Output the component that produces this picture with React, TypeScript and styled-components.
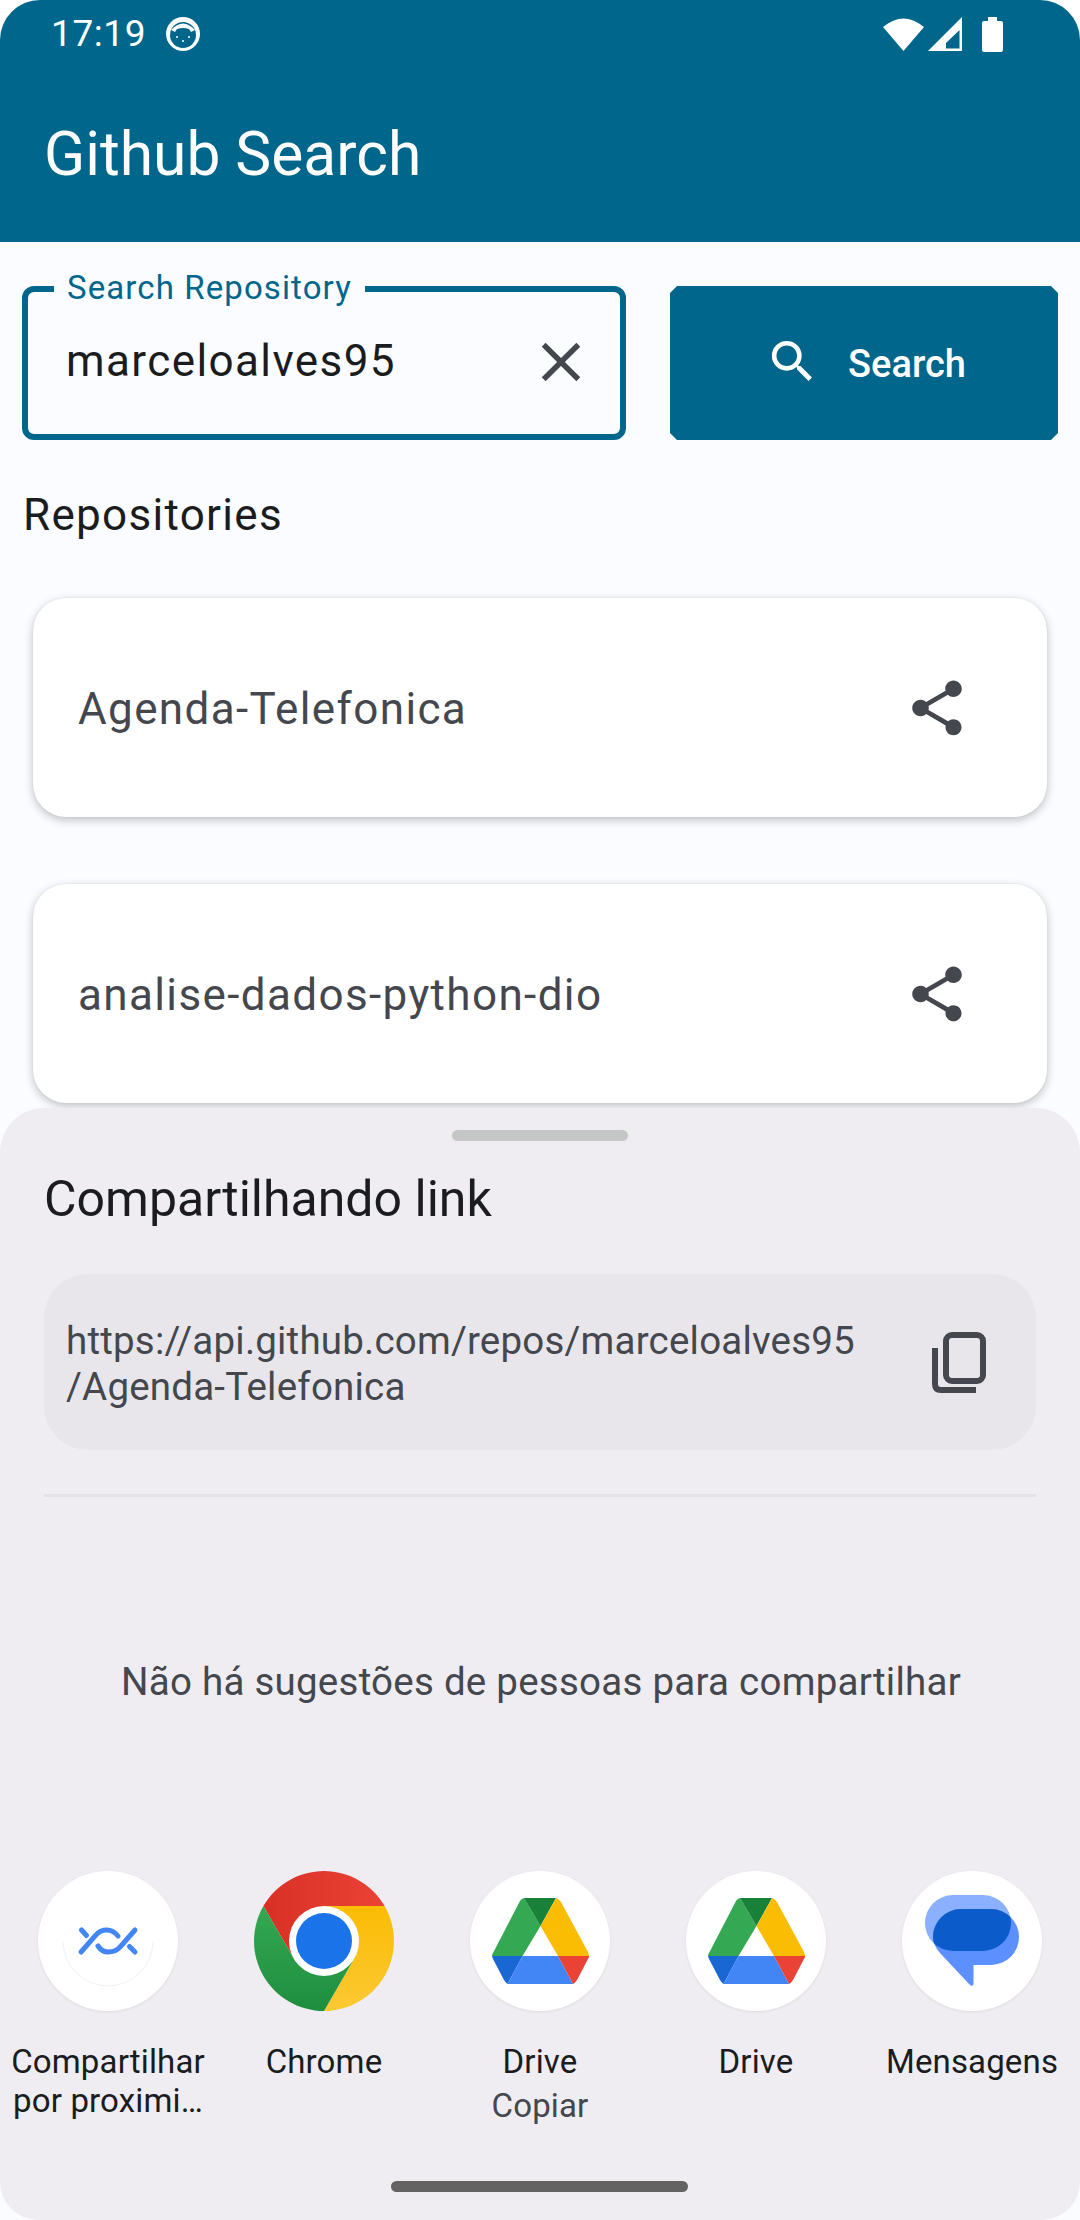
import React from 'react';
import styled, { createGlobalStyle } from 'styled-components';
import { MdClose, MdSearch, MdShare } from 'react-icons/md';

const GlobalStyle = createGlobalStyle`
	html, body {
		margin: 0;
		padding: 0;
		background: #fff;
	}

	* {
		box-sizing: border-box;
	}
`;

const Screen = styled.div`
	position: relative;
	width: 1080px;
	height: 2220px;
	overflow: hidden;
	background: #fbfcff;
	border-radius: 40px 40px 0 0;
	font-family: Roboto, 'Liberation Sans', sans-serif;
`;

const AppBar = styled.header`
	height: 242px;
	background: #00668b;
	color: #fff;
	display: flex;
	flex-direction: column;
`;

const StatusBar = styled.div`
	height: 68px;
	padding: 0 77px 0 51px;
	display: flex;
	align-items: center;
	justify-content: space-between;
`;

const StatusGroup = styled.div`
	display: flex;
	align-items: center;
	gap: ${(p: { $gap: number }) => p.$gap}px;
`;

const Clock = styled.span`
	font-size: 37px;
	line-height: 68px;
	letter-spacing: 0.6px;
`;

const BatterySlot = styled.span`
	display: flex;
	margin-left: 16px;
`;

const AppTitle = styled.h1`
	margin: 0;
	padding: 51px 0 0 44px;
	font-size: 60.5px;
	line-height: 72px;
	font-weight: 400;
`;

const SearchRow = styled.div`
	padding: 44px 22px 0 22px;
	display: flex;
	justify-content: space-between;
`;

const SearchField = styled.div`
	position: relative;
	width: 604px;
	height: 154px;
	border: 6.5px solid #00668b;
	border-radius: 12px;
	padding: 0 39px 0 38px;
	display: flex;
	align-items: flex-start;
	justify-content: space-between;
	color: #1a1c1e;
`;

const FieldLabel = styled.span`
	position: absolute;
	top: -23px;
	left: 26px;
	padding: 0 13px;
	background: #fbfcff;
	color: #00668b;
	font-size: 33px;
	line-height: 38px;
	letter-spacing: 1.1px;
`;

const FieldValue = styled.span`
	margin-top: 43px;
	font-size: 44px;
	line-height: 52px;
	letter-spacing: 1.4px;
`;

const ClearButton = styled.span`
	margin-top: 37px;
	margin-right: -13px;
	display: flex;
	color: #44474e;
	font-size: 66px;
`;

const SearchButton = styled.button`
	width: 388px;
	height: 154px;
	border: 0;
	background: #00668b;
	clip-path: polygon(7px 0, 381px 0, 388px 7px, 388px 147px, 381px 154px, 7px 154px, 0 147px, 0 7px);
	color: #fff;
	display: flex;
	align-items: center;
	justify-content: center;
	gap: 28px;
	padding: 2px 0 0 3px;
	font-family: inherit;
	font-size: 38px;
	font-weight: 500;

	svg {
		font-size: 55px;
		margin-top: -6px;
	}
`;

const SectionTitle = styled.h2`
	margin: 0;
	padding: 50px 0 0 23px;
	font-size: 44px;
	line-height: 50px;
	font-weight: 400;
	letter-spacing: 1.3px;
	color: #1a1c1e;
`;

const RepoList = styled.div`
	padding: 58px 33px 0;
	display: flex;
	flex-direction: column;
	gap: 67px;
`;

const RepoCard = styled.div`
	height: 219px;
	border-radius: 33px;
	background: #fff;
	box-shadow: 0 3px 10px rgba(0, 0, 0, 0.24), 0 0 2px rgba(0, 0, 0, 0.08);
	padding: 0 77px 0 45px;
	display: flex;
	align-items: center;
	justify-content: space-between;
`;

const RepoName = styled.span`
	padding-top: 3px;
	font-size: 44px;
	letter-spacing: 1.375px;
	color: #44474e;
`;

const ShareButton = styled.span`
	display: flex;
	color: #44474e;
	font-size: 66px;
`;

const Sheet = styled.section`
	position: absolute;
	left: 0;
	right: 0;
	top: 1108px;
	bottom: 0;
	background: #efedf2;
	border-radius: 44px 44px 38px 38px;
	display: flex;
	flex-direction: column;
	align-items: stretch;
`;

const Handle = styled.div`
	width: 176px;
	height: 11px;
	margin: 22px auto 0;
	border-radius: 6px;
	background: #c4c7c5;
`;

const SheetTitle = styled.h3`
	margin: 0;
	padding: 28px 44px 0;
	font-size: 50px;
	line-height: 60px;
	font-weight: 400;
	color: #1a1c1e;
`;

const LinkBox = styled.div`
	margin: 45px 44px 0;
	height: 176px;
	border-radius: 44px;
	background: #e8e6eb;
	padding: 3px 50px 0 22px;
	display: flex;
	align-items: center;
	justify-content: space-between;

	svg {
		margin-top: -3px;
	}
`;

const LinkText = styled.div`
	font-size: 38.5px;
	line-height: 46px;
	letter-spacing: 0.2px;
	color: #44474e;
`;

const Divider = styled.div`
	height: 3px;
	margin: 44px 44px 0;
	background: #e2e1e6;
`;

const EmptyNote = styled.p`
	margin: 162px 0 0;
	padding-left: 2px;
	text-align: center;
	font-size: 38.5px;
	line-height: 46px;
	letter-spacing: 0.25px;
	color: #44474e;
`;

const TargetGrid = styled.div`
	margin-top: 166px;
	display: grid;
	grid-template-columns: repeat(5, 216px);
`;

const Target = styled.div`
	display: flex;
	flex-direction: column;
	align-items: center;
	text-align: center;
`;

const TargetIcon = styled.div`
	width: 140px;
	height: 140px;
	border-radius: 50%;
	background: ${(p: { $plain?: boolean }) => (p.$plain ? 'transparent' : '#fff')};
	box-shadow: ${(p: { $plain?: boolean }) => (p.$plain ? 'none' : '0 1px 3px rgba(0, 0, 0, 0.08)')};
	display: flex;
	align-items: center;
	justify-content: center;
`;

const TargetLabel = styled.div`
	margin-top: 31px;
	width: 210px;
	font-size: 33px;
	line-height: 39px;
	letter-spacing: 0.15px;
	color: #1a1c1e;
`;

const TargetSub = styled.div`
	margin-top: 5px;
	font-size: 33px;
	line-height: 39px;
	letter-spacing: 0.15px;
	color: #44474e;
`;

const HomeIndicator = styled.div`
	position: absolute;
	left: 391px;
	bottom: 28px;
	width: 297px;
	height: 11px;
	border-radius: 6px;
	background: #636363;
`;

const BotIcon = () => (
	<svg width="34" height="34" viewBox="0 0 34 34">
		<circle cx="17" cy="17" r="17" fill="#fff" />
		<circle cx="17" cy="18" r="13" fill="#00668b" />
		<path d="M5 13 Q17 0 29 13 L25 15 L23 12 Q17 10 11 12 L9 15 Z" fill="#fff" />
		<circle cx="11" cy="20" r="1" fill="#fff" />
		<circle cx="17" cy="24" r="1" fill="#fff" />
		<circle cx="23" cy="20" r="1" fill="#fff" />
	</svg>
);

const WifiIcon = () => (
	<svg width="41" height="34" viewBox="0 0 41 34">
		<path d="M0 10 Q20.5 -7 41 10 L20.5 34 Z" fill="#fff" />
	</svg>
);

const SignalIcon = () => (
	<svg width="34" height="34" viewBox="0 0 34 34">
		<path d="M34 0 V34 H0 Z" fill="#fff" />
		<path d="M31.5 13 V31.5 H18 V26 Z" fill="#00668b" />
	</svg>
);

const BatteryIcon = () => (
	<svg width="21" height="35" viewBox="0 0 21 35">
		<path d="M6 0 H15 V4 H19 Q21 4 21 6 V33 Q21 35 19 35 H2 Q0 35 0 33 V6 Q0 4 2 4 H6 Z" fill="#fff" />
	</svg>
);

const CopyIcon = () => (
	<svg width="54" height="61" viewBox="0 0 54 61" fill="none" stroke="#44474e" strokeWidth="6">
		<rect x="14" y="3" width="37" height="46" rx="6" />
		<path d="M3 16 V52 Q3 58 9 58 H44" />
	</svg>
);

const NearbyIcon = () => (
	<svg width="140" height="140" viewBox="0 0 140 140" fill="none">
		<path d="M70 115 A45 45 0 0 1 25 70" stroke="#f1f1f1" strokeWidth="1" />
		<path d="M115 70 A45 45 0 0 1 70 115" stroke="#f1f1f1" strokeWidth="1" />
		<g transform="translate(41 57)" stroke="#4285f4" strokeWidth="5" strokeLinecap="round">
			<path d="M2 24 L17 7 Q21 2 28 2 Q34 2 39 8" />
			<path d="M56 2 L41 19 Q37 24 29 24 Q23 24 19 18" />
			<path d="M2.5 2 L7.5 7.5" />
			<path d="M50.5 18.5 L56 24" />
		</g>
	</svg>
);

const ChromeIcon = () => (
	<svg width="140" height="140" viewBox="-70 -70 140 140">
		<defs>
			<linearGradient id="chromeRed" x1="0" y1="0" x2="1" y2="0">
				<stop offset="0" stopColor="#d93025" />
				<stop offset="1" stopColor="#ea4335" />
			</linearGradient>
			<linearGradient id="chromeYellow" x1="0" y1="0" x2="0" y2="1">
				<stop offset="0" stopColor="#fbbc04" />
				<stop offset="1" stopColor="#fcc934" />
			</linearGradient>
			<linearGradient id="chromeGreen" x1="0" y1="1" x2="0" y2="0">
				<stop offset="0" stopColor="#1e8e3e" />
				<stop offset="1" stopColor="#34a853" />
			</linearGradient>
		</defs>
		<path d="M60.6 -35 A70 70 0 0 0 -60.6 -35 L-30.3 17.5 L0 -35 Z" fill="url(#chromeRed)" />
		<path d="M60.6 -35 A70 70 0 0 1 0 70 L30.3 17.5 L0 -35 Z" fill="url(#chromeYellow)" />
		<path d="M-60.6 -35 A70 70 0 0 0 0 70 L30.3 17.5 L-30.3 17.5 Z" fill="url(#chromeGreen)" />
		<circle r="35" fill="#fff" />
		<circle r="28" fill="#1a73e8" />
	</svg>
);

const DriveIcon = () => (
	<svg width="97" height="86" viewBox="0 0 97 86">
		<path d="M48.5 28 L30.5 58 H0 Q0 56 1 55 L28 3 Q29 1 32 0 Z" fill="#34a853" />
		<path d="M32 0 H64 L48.5 28 Z" fill="#188038" />
		<path d="M48.5 28 L64 0 Q67 1 69 4 L96 54 Q97 56 97 58 H66 Z" fill="#fbbc04" />
		<path d="M0 58 H30.5 L15.5 86 Q13 84 12 82 L1 61 Z" fill="#1967d2" />
		<path d="M30.5 58 H66 L81 86 Q80 86 77 86 H20 Q17 86 15.5 86 Z" fill="#4285f4" />
		<path d="M66 58 H97 Q97 60 96 61 L85 82 Q83 85 81 86 Z" fill="#ea4335" />
	</svg>
);

const MessagesIcon = () => (
	<svg width="94" height="92" viewBox="0 0 94 92">
		<defs>
			<clipPath id="messagesBack">
				<rect width="86" height="56" rx="28" />
			</clipPath>
		</defs>
		<rect width="86" height="56" rx="28" fill="#8ab0ff" />
		<path
			d="M36 14 H66 A28 28 0 0 1 66 70 H48.5 V89 Q48 92 45 90 L15 58 Q8 50 8 42 A28 28 0 0 1 36 14 Z"
			fill="#5c8fff"
		/>
		<path
			d="M36 14 H66 A28 28 0 0 1 66 70 H48.5 V89 Q48 92 45 90 L15 58 Q8 50 8 42 A28 28 0 0 1 36 14 Z"
			fill="#0b5bcb"
			clipPath="url(#messagesBack)"
		/>
	</svg>
);

const repos = ['Agenda-Telefonica', 'analise-dados-python-dio'];

const App = () => {
	return (
		<>
			<GlobalStyle />
			<Screen>
				<AppBar>
					<StatusBar>
						<StatusGroup $gap={20}>
							<Clock>17:19</Clock>
							<BotIcon />
						</StatusGroup>
						<StatusGroup $gap={4}>
							<WifiIcon />
							<SignalIcon />
							<BatterySlot>
								<BatteryIcon />
							</BatterySlot>
						</StatusGroup>
					</StatusBar>
					<AppTitle>Github Search</AppTitle>
				</AppBar>
				<SearchRow>
					<SearchField>
						<FieldLabel>Search Repository</FieldLabel>
						<FieldValue>marceloalves95</FieldValue>
						<ClearButton>
							<MdClose />
						</ClearButton>
					</SearchField>
					<SearchButton>
						<MdSearch />
						Search
					</SearchButton>
				</SearchRow>
				<SectionTitle>Repositories</SectionTitle>
				<RepoList>
					{repos.map((name) => (
						<RepoCard key={name}>
							<RepoName>{name}</RepoName>
							<ShareButton>
								<MdShare />
							</ShareButton>
						</RepoCard>
					))}
				</RepoList>
				<Sheet>
					<Handle />
					<SheetTitle>Compartilhando link</SheetTitle>
					<LinkBox>
						<LinkText>
							https://api.github.com/repos/marceloalves95
							<br />
							/Agenda-Telefonica
						</LinkText>
						<CopyIcon />
					</LinkBox>
					<Divider />
					<EmptyNote>Não há sugestões de pessoas para compartilhar</EmptyNote>
					<TargetGrid>
						<Target>
							<TargetIcon>
								<NearbyIcon />
							</TargetIcon>
							<TargetLabel>
								Compartilhar
								<br />
								por proximi…
							</TargetLabel>
						</Target>
						<Target>
							<TargetIcon $plain>
								<ChromeIcon />
							</TargetIcon>
							<TargetLabel>Chrome</TargetLabel>
						</Target>
						<Target>
							<TargetIcon>
								<DriveIcon />
							</TargetIcon>
							<TargetLabel>Drive</TargetLabel>
							<TargetSub>Copiar</TargetSub>
						</Target>
						<Target>
							<TargetIcon>
								<DriveIcon />
							</TargetIcon>
							<TargetLabel>Drive</TargetLabel>
						</Target>
						<Target>
							<TargetIcon>
								<MessagesIcon />
							</TargetIcon>
							<TargetLabel>Mensagens</TargetLabel>
						</Target>
					</TargetGrid>
					<HomeIndicator />
				</Sheet>
			</Screen>
		</>
	);
};

export default App;
